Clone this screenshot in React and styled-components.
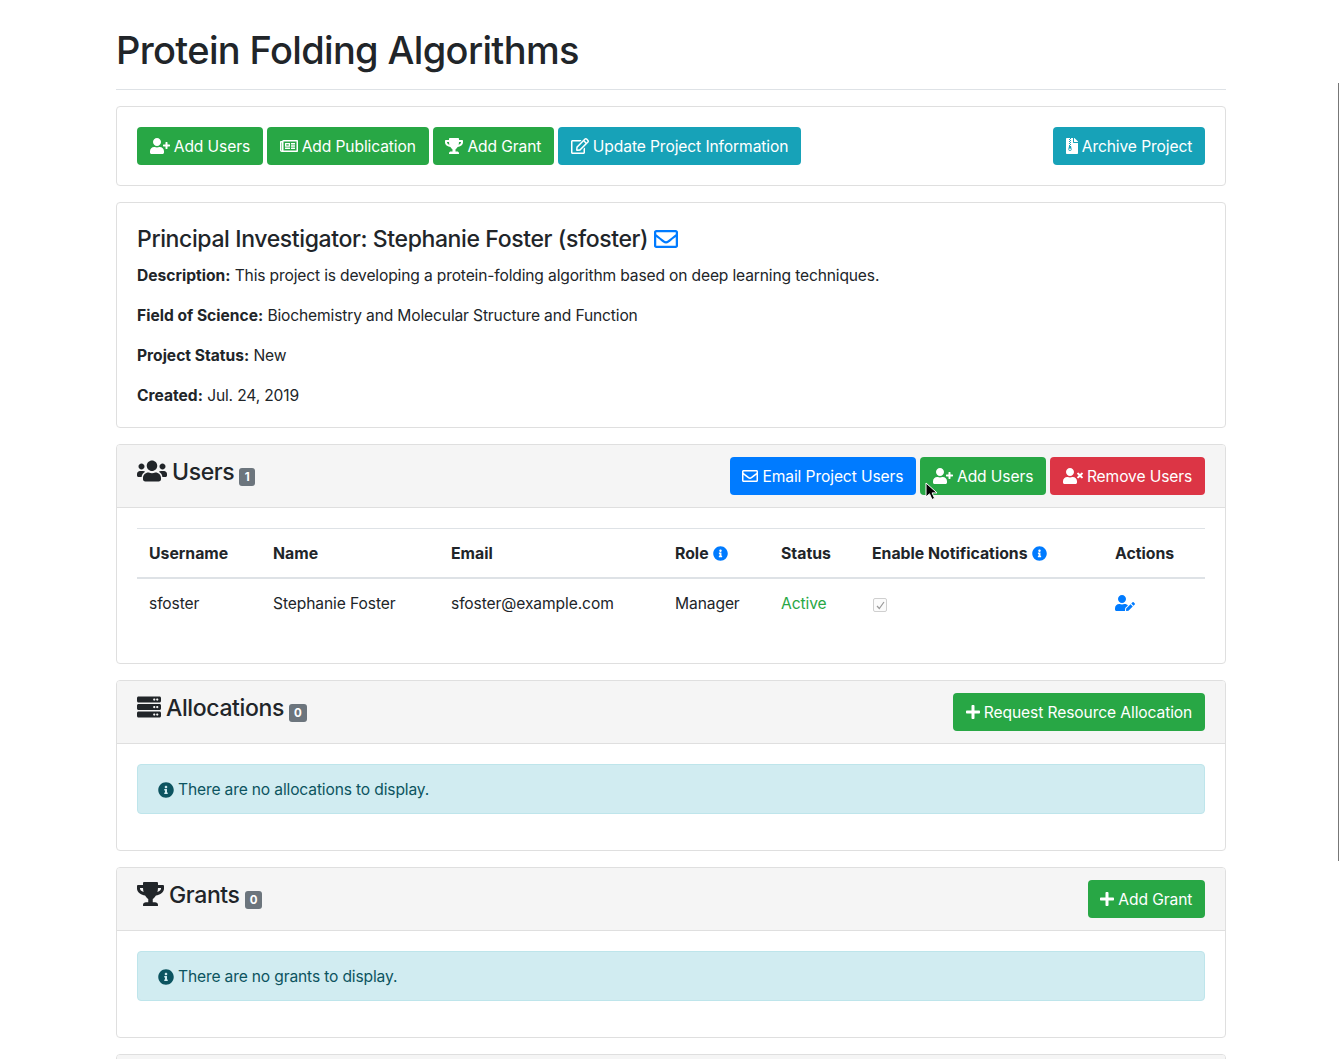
import React from 'react'
import styled, { createGlobalStyle } from 'styled-components'
import {
  FaUserPlus, FaRegNewspaper, FaTrophy, FaRegEdit, FaFileArchive, FaRegEnvelope,
  FaUsers, FaUserTimes, FaInfoCircle, FaUserEdit, FaServer, FaPlus
} from 'react-icons/fa'

const GlobalStyle = createGlobalStyle`
html, body {
  margin: 0;
  height: 1059px;
  overflow: hidden;
  background: #fff;
}
body {
  font-family: Inter, "Liberation Sans", sans-serif;
  font-size: 16px;
  line-height: 24px;
  color: #212529;
}
`

const colors = {
  success: '#28a745',
  info: '#17a2b8',
  primary: '#007bff',
  danger: '#dc3545'
}

// react-icons draws every glyph in a 1em square, these ones are wider or narrower
const UserPlusIcon = styled(FaUserPlus)`&& { width: 1.25em; }`
const UsersIcon = styled(FaUsers)`&& { width: 1.25em; }`
const UserTimesIcon = styled(FaUserTimes)`&& { width: 1.25em; }`
const UserEditIcon = styled(FaUserEdit)`&& { width: 1.25em; }`
const NewspaperIcon = styled(FaRegNewspaper)`&& { width: 1.125em; }`
const TrophyIcon = styled(FaTrophy)`&& { width: 1.125em; }`
const EditIcon = styled(FaRegEdit)`&& { width: 1.125em; }`
const ArchiveIcon = styled(FaFileArchive)`&& { width: 0.75em; }`
const PlusIcon = styled(FaPlus)`&& { width: 0.875em; }`

const Container = styled.div`
width: 1110px;
margin-left: 116px;
padding-top: 26px;
`
const Title = styled.h1`
font-size: 38px;
line-height: 48px;
font-weight: 500;
letter-spacing: -0.65px;
margin: 0;
padding-bottom: 15px;
border-bottom: 1px solid #dee2e6;
margin-bottom: 16px;
`
const Card = styled.section`
border: 1px solid #dfdfdf;
border-radius: 4px;
margin-bottom: 16px;
background: #fff;
`
const Toolbar = styled.div`
display: flex;
justify-content: space-between;
padding: 20px;
`
const ButtonGroup = styled.div`
display: flex;
gap: 4px;
`
const Button = styled.a`
display: inline-flex;
align-items: center;
gap: 4px;
height: 38px;
box-sizing: border-box;
padding: 2px 12.75px 0;
border-radius: 4px;
color: #fff;
font-size: 15.6px;
letter-spacing: -0.1px;
white-space: nowrap;
background: ${props => colors[props.$kind]};
svg { font-size: 16px; flex: none; margin-bottom: 2px; }
`
const CardBody = styled.div`
padding: 20px;
`
const Investigator = styled.h3`
font-size: 23px;
line-height: 32px;
font-weight: 500;
letter-spacing: -0.38px;
margin: 0 0 8px;
display: flex;
align-items: center;
gap: 6px;
svg { color: ${colors.primary}; font-size: 24px; }
`
const Fact = styled.p`
margin: 0 0 16px;
height: 24px;
line-height: 26px;
font-size: 15.6px;
letter-spacing: -0.15px;
&:last-child { margin-bottom: 0; }
b { font-weight: 700; letter-spacing: 0; }
`
const CardHeader = styled.div`
display: flex;
justify-content: space-between;
align-items: flex-start;
min-height: 38px;
padding: 12px 20px;
background: #f5f5f5;
border-bottom: 1px solid #dfdfdf;
border-radius: 3px 3px 0 0;
`
const HeaderTitle = styled.h4`
display: flex;
align-items: center;
gap: 5px;
margin: 1px 0 0;
font-size: 23px;
line-height: 29px;
font-weight: 500;
letter-spacing: -0.38px;
svg { font-size: 24px; flex: none; margin-bottom: 3px; }
`
const Badge = styled.span`
display: inline-block;
min-width: 16px;
box-sizing: border-box;
height: 18px;
line-height: 18px;
margin: 8px 0 0;
padding: 0 5px;
border-radius: 3px;
background: #6c757d;
color: #fff;
font-size: 11.5px;
font-weight: 700;
letter-spacing: 0;
text-align: center;
`
const Table = styled.table`
width: 100%;
table-layout: fixed;
border-collapse: collapse;
margin-bottom: 16px;
font-size: 15.6px;
`
const Th = styled.th`
width: ${props => props.$w}px;
box-sizing: border-box;
padding: 13px 12px 11px;
text-align: left;
font-size: 15.8px;
font-weight: 700;
white-space: nowrap;
border-top: 1px solid #dee2e6;
border-bottom: 2px solid #dee2e6;
svg { color: ${colors.primary}; font-size: 15px; vertical-align: -2px; margin-left: 1px; }
`
const Td = styled.td`
padding: 13px 12px 11px;
white-space: nowrap;
letter-spacing: -0.1px;
`
const StatusText = styled.span`
color: ${colors.success};
`
const Checkbox = styled.span`
display: inline-flex;
align-items: center;
justify-content: center;
box-sizing: border-box;
width: 14px;
height: 14px;
margin: 6px 0 0 1px;
vertical-align: top;
border: 1px solid #cfcfcf;
border-radius: 2px;
background: #fbfbfb;
`
const ActionLink = styled.a`
color: ${colors.primary};
svg { font-size: 16px; vertical-align: -2px; }
`
const Alert = styled.div`
display: flex;
align-items: center;
gap: 4px;
height: 50px;
box-sizing: border-box;
padding: 2px 20px 0;
margin-bottom: 16px;
color: #0c5460;
background: #d1ecf1;
border: 1px solid #bee5eb;
border-radius: 4px;
font-size: 15.6px;
letter-spacing: -0.15px;
svg { font-size: 16px; flex: none; }
`
const Pointer = styled.svg`
position: absolute;
left: 925px;
top: 482px;
width: 13px;
height: 19px;
`
const ScrollEdge = styled.div`
position: absolute;
right: 0;
top: 83px;
width: 1px;
height: 778px;
background: #777;
`

const Btn = ({ kind, icon: Icon, children }) => (
  <Button $kind={kind}><Icon />{children}</Button>
)

const Section = ({ icon: Icon, title, count, actions, children }) => (
  <Card>
    <CardHeader>
      <HeaderTitle><Icon />{title}<Badge>{count}</Badge></HeaderTitle>
      <ButtonGroup>{actions}</ButtonGroup>
    </CardHeader>
    <CardBody>{children}</CardBody>
  </Card>
)

const Empty = ({ children }) => (
  <Alert><FaInfoCircle />{children}</Alert>
)

const App = () => (
  <>
    <GlobalStyle />
    <Container>
      <Title>Protein Folding Algorithms</Title>

      <Card>
        <Toolbar>
          <ButtonGroup>
            <Btn kind="success" icon={UserPlusIcon}>Add Users</Btn>
            <Btn kind="success" icon={NewspaperIcon}>Add Publication</Btn>
            <Btn kind="success" icon={TrophyIcon}>Add Grant</Btn>
            <Btn kind="info" icon={EditIcon}>Update Project Information</Btn>
          </ButtonGroup>
          <Btn kind="info" icon={ArchiveIcon}>Archive Project</Btn>
        </Toolbar>
      </Card>

      <Card>
        <CardBody>
          <Investigator>Principal Investigator: Stephanie Foster (sfoster) <FaRegEnvelope /></Investigator>
          <Fact><b>Description:</b> This project is developing a protein-folding algorithm based on deep learning techniques.</Fact>
          <Fact><b>Field of Science:</b> Biochemistry and Molecular Structure and Function</Fact>
          <Fact><b>Project Status:</b> New</Fact>
          <Fact><b>Created:</b> Jul. 24, 2019</Fact>
        </CardBody>
      </Card>

      <Section
        icon={UsersIcon}
        title="Users"
        count={1}
        actions={<>
          <Btn kind="primary" icon={FaRegEnvelope}>Email Project Users</Btn>
          <Btn kind="success" icon={UserPlusIcon}>Add Users</Btn>
          <Btn kind="danger" icon={UserTimesIcon}>Remove Users</Btn>
        </>}
      >
        <Table>
          <thead>
            <tr>
              <Th $w={124}>Username</Th>
              <Th $w={178}>Name</Th>
              <Th $w={224}>Email</Th>
              <Th $w={106}>Role <FaInfoCircle /></Th>
              <Th $w={91}>Status</Th>
              <Th $w={243}>Enable Notifications <FaInfoCircle /></Th>
              <Th>Actions</Th>
            </tr>
          </thead>
          <tbody>
            <tr>
              <Td>sfoster</Td>
              <Td>Stephanie Foster</Td>
              <Td>sfoster@example.com</Td>
              <Td>Manager</Td>
              <Td><StatusText>Active</StatusText></Td>
              <Td>
                <Checkbox>
                  <svg width="9" height="9" viewBox="0 0 9 9"><path d="M1 5l2.3 2.5L8 1" fill="none" stroke="#9a9a9a" strokeWidth="1.2" /></svg>
                </Checkbox>
              </Td>
              <Td><ActionLink><UserEditIcon /></ActionLink></Td>
            </tr>
          </tbody>
        </Table>
      </Section>

      <Section
        icon={FaServer}
        title="Allocations"
        count={0}
        actions={<Btn kind="success" icon={PlusIcon}>Request Resource Allocation</Btn>}
      >
        <Empty>There are no allocations to display.</Empty>
      </Section>

      <Section
        icon={TrophyIcon}
        title="Grants"
        count={0}
        actions={<Btn kind="success" icon={PlusIcon}>Add Grant</Btn>}
      >
        <Empty>There are no grants to display.</Empty>
      </Section>

      <Card><CardHeader /></Card>
    </Container>

    <Pointer viewBox="0 0 13 19">
      <path d="M1 1v14l3.5-3.2L7 17.5l2.6-1.2-2.5-5.4H12z" fill="#000" stroke="#fff" strokeWidth="1" />
    </Pointer>
    <ScrollEdge />
  </>
)

export default App
